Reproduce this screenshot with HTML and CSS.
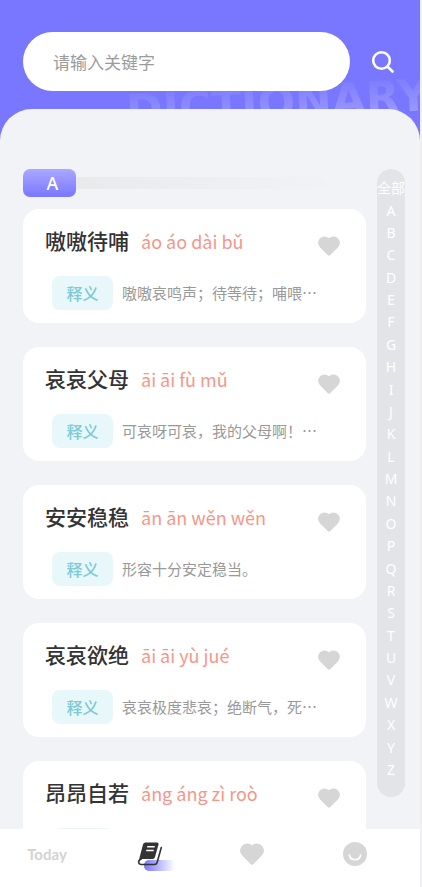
FILE: index.html
```html
<!DOCTYPE html>
<html lang="zh-CN">
<head>
<meta charset="utf-8">
<meta name="viewport" content="width=device-width, initial-scale=1">
<title>成语词典</title>
<link rel="stylesheet" href="styles.css">
</head>
<body>
<svg class="defs" aria-hidden="true">
  <symbol id="heart" viewBox="0 0 24 22">
    <path d="M10.800 21.300 2.200 12.600A7 7 0 0 1 12 2.500a7 7 0 0 1 9.800 10.100L13.200 21.300Q12 22.300 10.800 21.300Z"/>
  </symbol>
</svg>
<div class="app">
  <header class="top">
    <div class="wordmark" aria-hidden="true">DICTIONARY</div>
    <form class="search">
      <input class="search-input" type="text" placeholder="请输入关键字" aria-label="请输入关键字">
      <button class="search-button" type="button" aria-label="搜索">
        <svg viewBox="0 0 24 24" width="24" height="24"><circle cx="10.500" cy="10.500" r="8.300"/><path d="m16.500 16.500 5 5"/></svg>
      </button>
    </form>
  </header>
  <main class="panel">
    <section class="entries">
      <div class="section-head"><h1 class="letter">A</h1><span class="rule"></span></div>
      <article class="card">
        <div class="card-head"><h2 class="word">嗷嗷待哺</h2><span class="pinyin">áo áo dài bǔ</span><button class="like" type="button" aria-label="收藏"><svg><use href="#heart"/></svg></button></div>
        <div class="meaning"><span class="tag">释义</span><p class="desc">嗷嗷哀鸣声；待等待；哺喂…</p></div>
      </article>
      <article class="card">
        <div class="card-head"><h2 class="word">哀哀父母</h2><span class="pinyin">āi āi fù mǔ</span><button class="like" type="button" aria-label="收藏"><svg><use href="#heart"/></svg></button></div>
        <div class="meaning"><span class="tag">释义</span><p class="desc">可哀呀可哀，我的父母啊！…</p></div>
      </article>
      <article class="card">
        <div class="card-head"><h2 class="word">安安稳稳</h2><span class="pinyin">ān ān wěn wěn</span><button class="like" type="button" aria-label="收藏"><svg><use href="#heart"/></svg></button></div>
        <div class="meaning"><span class="tag">释义</span><p class="desc">形容十分安定稳当。</p></div>
      </article>
      <article class="card">
        <div class="card-head"><h2 class="word">哀哀欲绝</h2><span class="pinyin">āi āi yù jué</span><button class="like" type="button" aria-label="收藏"><svg><use href="#heart"/></svg></button></div>
        <div class="meaning"><span class="tag">释义</span><p class="desc">哀哀极度悲哀；绝断气，死…</p></div>
      </article>
      <article class="card">
        <div class="card-head"><h2 class="word">昂昂自若</h2><span class="pinyin">áng áng zì roò</span><button class="like" type="button" aria-label="收藏"><svg><use href="#heart"/></svg></button></div>
        <div class="meaning"><span class="tag"></span></div>
      </article>
    </section>
    <nav class="index" aria-label="字母索引">
      <a href="#all">全部</a><a href="#A">A</a><a href="#B">B</a><a href="#C">C</a><a href="#D">D</a><a href="#E">E</a><a href="#F">F</a><a href="#G">G</a><a href="#H">H</a><a href="#I">I</a><a href="#J">J</a><a href="#K">K</a><a href="#L">L</a><a href="#M">M</a><a href="#N">N</a><a href="#O">O</a><a href="#P">P</a><a href="#Q">Q</a><a href="#R">R</a><a href="#S">S</a><a href="#T">T</a><a href="#U">U</a><a href="#V">V</a><a href="#W">W</a><a href="#X">X</a><a href="#Y">Y</a><a href="#Z">Z</a>
    </nav>
  </main>
  <nav class="tabs">
    <a class="tab today" href="#today">Today</a>
    <a class="tab book" href="#book" aria-label="词典">
      <svg viewBox="0 0 26 26" width="26" height="26">
        <path class="ink" d="M8.500 1.500H20q2 0 1.500 2L18 16q-.5 2-2.500 2H5q-2.500 0-3.500 2.500L6 3.500q.5-2 2.500-2Z"/>
        <path class="line" d="M4 18.300Q1.500 19 1.700 21.500 2 23.500 4.500 23.500H17.500q2 0 2.600-2L24.300 6.500"/>
        <path class="page" d="M10.200 5.700h7.500M9.200 9.500h7.500"/>
      </svg>
    </a>
    <a class="tab fav" href="#fav" aria-label="收藏"><svg><use href="#heart"/></svg></a>
    <a class="tab" href="#me" aria-label="我的">
      <svg viewBox="0 0 24 24" width="24" height="24"><circle class="face" cx="12" cy="12" r="12"/><path class="smile" d="M6.300 13a5.800 5.800 0 0 0 11.400 0"/></svg>
    </a>
  </nav>
</div>
</body>
</html>
```
FILE: styles.css
```css
* { box-sizing: border-box; }

body {
  margin: 0;
  background: #efeff1;
  font-family: "Noto Sans CJK SC", "Noto Sans", sans-serif;
}

h1, h2, p { margin: 0; font-weight: 400; }
a { color: inherit; text-decoration: none; }
button { padding: 0; border: 0; background: none; }
svg { display: block; }
.defs { position: absolute; width: 0; height: 0; }

.app {
  display: flex;
  flex-direction: column;
  height: 100vh;
  margin-right: 2px;
  background: #7977ff;
  overflow: hidden;
}

/* Header */
.top {
  position: relative;
  flex: none;
  padding: 32px 24px 18px 23px;
}

.wordmark {
  position: absolute;
  left: 126px;
  top: 79px;
  font: 700 44px/48px "DejaVu Sans", sans-serif;
  white-space: nowrap;
  color: transparent;
  background: linear-gradient(rgba(255, 255, 255, 0.04) 10%, rgba(255, 255, 255, 0.26) 85%);
  background-clip: text;
  -webkit-background-clip: text;
  transform: rotate(-3deg);
}

.search {
  position: relative;
  display: flex;
  align-items: center;
  gap: 20px;
}

.search-input {
  flex: 1;
  min-width: 0;
  height: 59px;
  padding: 0 30px;
  border: 0;
  border-radius: 30px;
  background: #fff;
  font-family: inherit;
  font-size: 17px;
  color: #333;
}
.search-input::placeholder { color: #9b9b9b; opacity: 1; }

.search-button { width: 26px; display: flex; justify-content: center; }
.search-button svg { fill: none; stroke: #fff; stroke-width: 2.6; stroke-linecap: round; }

/* Content */
.panel {
  position: relative;
  flex: 1;
  min-height: 0;
  display: flex;
  gap: 11px;
  padding: 60px 15px 0 23px;
  border-radius: 32px 32px 0 0;
  background: #f2f3f7;
}

.entries {
  flex: 1;
  min-width: 0;
  display: flex;
  flex-direction: column;
  gap: 24px;
  overflow: hidden;
}

.section-head {
  flex: none;
  display: flex;
  align-items: center;
  height: 28px;
  margin-bottom: -12px;
}

.letter {
  width: 53px;
  height: 28px;
  padding-left: 6px;
  border-radius: 7px;
  background: linear-gradient(#aaa8ff, #7977ff);
  color: #fff;
  font: 500 18px/29px "Noto Sans", sans-serif;
  text-align: center;
}

.rule {
  flex: 1;
  height: 12px;
  margin-right: 24px;
  background: linear-gradient(90deg, #e9eaec, #f2f3f7);
}

.card {
  flex: none;
  height: 114px;
  padding: 18px 26px 0 22px;
  border-radius: 16px;
  background: #fff;
}

.card-head {
  display: flex;
  align-items: flex-start;
  height: 30px;
  gap: 12px;
}

.word { font-size: 21px; line-height: 26px; font-weight: 500; color: #333; }
.pinyin { font-size: 18px; line-height: 28px; color: #f4978a; }
.like { margin-left: auto; padding-top: 9px; }
.like svg { width: 22px; height: 20px; fill: #d6d6d6; }

.meaning {
  display: flex;
  align-items: center;
  gap: 9px;
  margin-top: 19px;
  padding-left: 7px;
}

.tag {
  flex: none;
  width: 61px;
  height: 34px;
  border-radius: 8px;
  background: #e8f7fa;
  color: #7bcad5;
  font-size: 16px;
  font-weight: 500;
  line-height: 34px;
  text-align: center;
}

.desc { font-size: 15px; line-height: 34px; color: #999; white-space: nowrap; }

/* Letter index */
.index {
  flex: none;
  display: flex;
  flex-direction: column;
  width: 28px;
  margin-bottom: 32px;
  padding: 8px 0 16px;
  border-radius: 14px;
  background: #e3e4e7;
  color: #fff;
  font-family: "Noto Sans", "Noto Sans CJK SC", sans-serif;
  font-size: 14px;
  text-align: center;
}
.index a {
  flex: 1;
  min-height: 0;
  display: flex;
  align-items: center;
  justify-content: center;
  line-height: 20px;
  white-space: nowrap;
}

/* Bottom tabs */
.tabs {
  position: relative;
  flex: none;
  display: flex;
  justify-content: space-between;
  height: 58px;
  padding: 0 40px 8px 22px;
  background: #fff;
}

.tab {
  position: relative;
  display: flex;
  align-items: center;
  justify-content: center;
  width: 50px;
}

.today { font: 700 15px/20px Lato, sans-serif; color: #d3d3d3; }
.fav svg { width: 24px; height: 22px; fill: #d6d6d6; }
.face { fill: #d6d6d6; }
.smile { fill: none; stroke: #fff; stroke-width: 1.6; stroke-linecap: round; }

.book::before {
  content: "";
  position: absolute;
  left: 19px;
  bottom: 8px;
  width: 31px;
  height: 11px;
  border-radius: 5px;
  background: linear-gradient(90deg, #7977ff, rgba(121, 119, 255, 0));
}
.book svg { position: relative; }
.ink { fill: #333; }
.line { fill: none; stroke: #333; stroke-width: 1.6; stroke-linecap: round; stroke-linejoin: round; }
.page { fill: none; stroke: #fff; stroke-width: 1.5; }
```
